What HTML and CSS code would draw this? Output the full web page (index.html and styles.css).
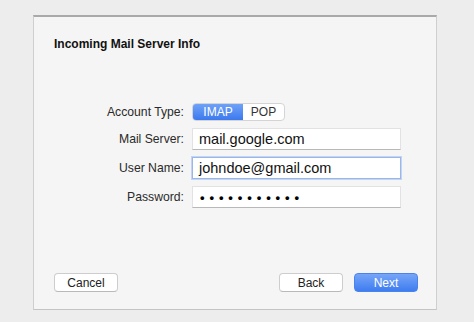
FILE: index.html
```html
<!DOCTYPE html>
<html>
<head>
  <meta charset="UTF-8">
  <title>Incoming Mail Server Info</title>
  <link rel="stylesheet" href="styles.css">
</head>
<body>
  <div class="sheet">
    <h1 class="sheet-title">Incoming Mail Server Info</h1>

    <div class="form">
      <label class="form-label">Account Type:</label>
      <div class="segmented">
        <button class="segment selected">IMAP</button>
        <button class="segment">POP</button>
      </div>

      <label class="form-label">Mail Server:</label>
      <div class="field">mail.google.com</div>

      <label class="form-label">User Name:</label>
      <div class="field focused">johndoe@gmail.com</div>

      <label class="form-label">Password:</label>
      <div class="field password">•••••••••••</div>
    </div>

    <div class="footer">
      <button class="btn">Cancel</button>
      <div class="footer-right">
        <button class="btn">Back</button>
        <button class="btn primary">Next</button>
      </div>
    </div>
  </div>
</body>
</html>
```

FILE: styles.css
```css
body {
  margin: 0;
  padding: 15px 37px 13px 33px;
  background: #ededed;
  font-family: "Liberation Sans", Arial, sans-serif;
  color: #222;
}

.sheet {
  height: 295px;
  box-sizing: border-box;
  background: #f5f5f5;
  border: 1px solid #cfcfcf;
  border-top: 2px solid #a9a9a9;
  border-bottom-color: #c4c4c4;
  display: flex;
  flex-direction: column;
  padding: 19px 18px 17px 20px;
}

.sheet-title {
  margin: 0;
  font-size: 12px;
  line-height: 16px;
  font-weight: bold;
  color: #111;
}

.form {
  margin-top: 51px;
  margin-left: -21px;
  display: grid;
  grid-template-columns: 151px 209px;
  column-gap: 8px;
  grid-template-rows: 18px 22px 22px 22px;
  row-gap: 7px;
  align-items: center;
}

.form-label {
  text-align: right;
  font-size: 12.2px;
  color: #2a2a2a;
}

.segmented {
  display: flex;
  width: 93px;
  height: 18px;
  border-radius: 4px;
  overflow: hidden;
  border: 1px solid #d4d4d4;
  box-sizing: border-box;
  background: #fff;
}

.segment {
  border: none;
  background: transparent;
  font-family: inherit;
  font-size: 12px;
  color: #333;
  padding: 0;
  height: 100%;
  flex: 1;
}

.segment.selected {
  flex: 0 0 50px;
  color: #fff;
  background: linear-gradient(#6fa2f7, #3c79ef);
}

.field {
  height: 22px;
  box-sizing: border-box;
  background: #fff;
  border: 1px solid #e2e2e2;
  border-bottom: 1px solid #b8b8b8;
  padding: 0 6px;
  font-size: 14.5px;
  line-height: 21px;
  color: #111;
}

.field.focused {
  border: 1px solid #9ab6ea;
  box-shadow: 0 0 0 1px #c4d5f3;
}

.field.password {
  font-size: 13px;
  font-weight: bold;
  letter-spacing: 4.9px;
  padding-left: 7px;
  color: #000;
}

.footer {
  margin-top: auto;
  display: flex;
  justify-content: space-between;
  align-items: center;
}

.footer-right {
  display: flex;
  gap: 11px;
}

.btn {
  width: 64px;
  height: 19px;
  padding: 0;
  box-sizing: border-box;
  background: #fff;
  border: 1px solid #cdcdcd;
  border-bottom-color: #b9b9b9;
  border-radius: 4px;
  font-family: inherit;
  font-size: 12px;
  color: #222;
}

.btn.primary {
  color: #fff;
  border-color: #4b83ee;
  background: linear-gradient(#76a6f8, #3f7cf0);
}
```
